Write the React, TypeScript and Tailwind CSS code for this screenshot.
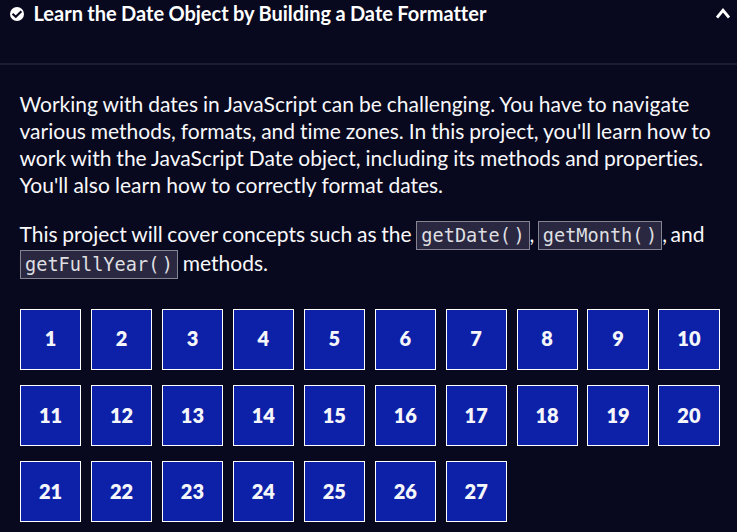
const steps = Array.from({ length: 27 }, (_, i) => i + 1);

function Code({ name }: { name: string }) {
  return (
    <code className="-my-1 inline-block h-[29px] border border-[#858591] bg-[#2a2840] px-1 align-baseline font-['DejaVu_Sans_Mono',monospace] text-[18.6px] leading-[27px] text-[#dfdfe2] [word-spacing:0]">
      {name}<span className="tracking-[2.5px]">(</span>)
    </code>
  );
}

export default function App() {
  return (
    <main className="h-[532px] w-[737px] overflow-hidden bg-[#08081f] font-['Lato',sans-serif] text-white [font-variant-ligatures:none]">
      <header className="flex h-[65px] items-start border-b-2 border-[#1b1b32] pl-[10px] pr-[7px]">
        <svg className="mt-[7px] size-[14px] shrink-0" viewBox="0 0 14 14">
          <circle cx="7" cy="7" r="7" fill="white" />
          <path d="M2.5 6.7l3.3 3 5.6-5.5" fill="none" stroke="#08081f" strokeWidth="2.1" />
        </svg>
        <h1 className="ml-[9.5px] whitespace-nowrap text-[20px] font-bold leading-[27px] [word-spacing:-0.5px]">Learn the Date Object by Building a Date Formatter</h1>
        <svg className="ml-auto mt-[8px] h-[11px] w-[14px] shrink-0" viewBox="0 0 14 11">
          <path d="M1 9.5l6-7.2 6 7.2" fill="none" stroke="white" strokeWidth="2.8" />
        </svg>
      </header>
      <section className="px-[19.5px] pt-[25px] text-[21px] leading-[27px] text-[#f8f8fa]">
        <p className="whitespace-nowrap [word-spacing:-0.4px]">
          Working with dates in JavaScript can be challenging. You have to navigate<br />
          <span className="[word-spacing:-0.5px]">various methods, formats, and time zones. In this project, you'll learn how to</span><br />
          work with the JavaScript Date object, including its methods and properties.<br />
          <span className="[word-spacing:-0.1px]">You'll also learn how to correctly format dates.</span>
        </p>
        <p className="mt-[21px] whitespace-nowrap leading-[29px] [word-spacing:-0.65px]">
          This project will cover concepts such as the <Code name="getDate" /><span className="[word-spacing:-2px]">, </span><Code name="getMonth" /><span className="[word-spacing:-1.8px]">, and</span><br />
          <span className="ml-[0.5px]"><Code name="getFullYear" /></span> methods.
        </p>
      </section>
      <ol className="ml-5 mt-[32px] grid w-[699.55px] grid-cols-10 gap-x-[9.75px] gap-y-[15px]">
        {steps.map((step) => (
          <li
            key={step}
            className={`flex h-[61px] items-center justify-center border border-white bg-[#0d20a8] text-[20px] font-extrabold text-[#f5f6fa] ${step <= 10 ? "pb-[4px]" : "pb-[2px]"}`}
          >
            {step}
          </li>
        ))}
      </ol>
    </main>
  );
}
